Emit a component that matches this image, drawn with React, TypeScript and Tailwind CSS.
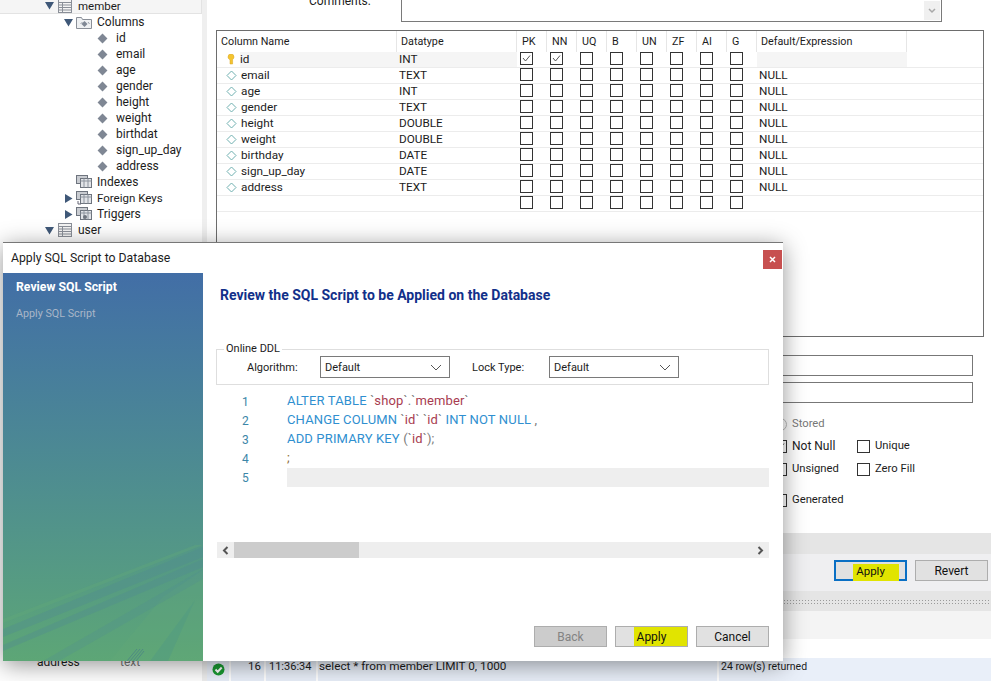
import React from "react";

const FONT = "font-['Roboto',sans-serif]";

function Tri({ open }: { open?: boolean }) {
  return (
    <svg width="9" height="9" viewBox="0 0 9 9" className="shrink-0">
      {open ? <path d="M0 1h9L4.5 8.5z" fill="#3f5878" /> : <path d="M1 0v9L8.5 4.5z" fill="#3f5878" />}
    </svg>
  );
}

function TableIcon() {
  return (
    <svg width="14" height="14" viewBox="0 0 14 14" className="shrink-0">
      <rect x="0.5" y="0.5" width="13" height="13" fill="#f4f4f4" stroke="#8a8f98" />
      <path d="M0.5 3.5h13M0.5 6h13M0.5 8.5h13M0.5 11h13M4.5 3.5v10" stroke="#8a8f98" strokeWidth="1" fill="none" />
    </svg>
  );
}

function FolderIcon() {
  return (
    <svg width="16" height="13" viewBox="0 0 16 13" className="shrink-0">
      <path d="M0.5 12.5V1.5h5l1 2h9v9z" fill="#eef0f2" stroke="#8a8f98" />
      <path d="M8.5 5l3 3-3 3-3-3z" fill="#7f8794" />
      <path d="M4.5 8l2-2M12 6l1.5 2" stroke="#9aa1ab" />
    </svg>
  );
}

function StackIcon({ kind }: { kind: string }) {
  return (
    <svg width="16" height="14" viewBox="0 0 16 14" className="shrink-0">
      <rect x="0.5" y="0.5" width="11" height="8" fill="#c9ccd1" stroke="#6e747e" />
      <rect x="4.5" y="3.5" width="11" height="9" fill="#e2e4e8" stroke="#6e747e" />
      <path d="M4.5 6h11M8 3.5v9M12 3.5v9" stroke="#8d949e" />
      {kind === "fk" && <path d="M2 10v3h3" stroke="#667" fill="none" />}
      {kind === "tr" && <circle cx="9" cy="10" r="2" fill="#6e747e" />}
    </svg>
  );
}

function Diamond() {
  return <span className="block w-[7px] h-[7px] rotate-45 bg-[#7f8794] shrink-0" />;
}

function ColDiamond() {
  return (
    <svg width="11" height="11" viewBox="0 0 11 11" className="shrink-0">
      <path d="M5.5 1L10 5.5 5.5 10 1 5.5z" fill="#fff" stroke="#6fb0b0" />
    </svg>
  );
}

function KeyIcon() {
  return (
    <svg width="8" height="11" viewBox="0 0 8 11" className="shrink-0">
      <path d="M1 3a3 3 0 0 1 6 0c0 1.5-1 2-1.400 2.600V10H3V6C2 5 1 4.500 1 3z" fill="#f4c430" stroke="#d9a520" strokeWidth="0.5" />
    </svg>
  );
}

function Check({ on }: { on?: boolean }) {
  return (
    <span className="block w-[13px] h-[13px] border shrink-0 bg-white border-[#333]">
      {on && (
        <svg width="11" height="11" viewBox="0 0 11 11" className="block">
          <path d="M2 5l2.500 3L9 2.500" stroke="#555" strokeWidth="1" fill="none" />
        </svg>
      )}
    </span>
  );
}

function Chevron({ dir }: { dir: "l" | "r" }) {
  return (
    <svg width="7" height="9" viewBox="0 0 7 9">
      <path d={dir === "l" ? "M5.500 1L2 4.500 5.500 8" : "M1.500 1L5 4.500 1.500 8"} stroke="#555" strokeWidth="2" fill="none" />
    </svg>
  );
}

function DownChevron() {
  return (
    <svg width="12" height="7" viewBox="0 0 12 7" className="shrink-0">
      <path d="M1 1l5 5 5-5" stroke="#555" strokeWidth="1" fill="none" />
    </svg>
  );
}

const cols = ["id", "email", "age", "gender", "height", "weight", "birthdat", "sign_up_day", "address"];

const rows = [
  ["id", "INT", ""],
  ["email", "TEXT", "NULL"],
  ["age", "INT", "NULL"],
  ["gender", "TEXT", "NULL"],
  ["height", "DOUBLE", "NULL"],
  ["weight", "DOUBLE", "NULL"],
  ["birthday", "DATE", "NULL"],
  ["sign_up_day", "DATE", "NULL"],
  ["address", "TEXT", "NULL"],
  ["", "", ""],
];

const flags = ["PK", "NN", "UQ", "B", "UN", "ZF", "AI", "G"];
const GRID = "grid grid-cols-[180px_120px_repeat(8,30px)_150px_1fr]";

function Sidebar() {
  return (
    <aside className="w-[202px] shrink-0 h-full flex flex-col overflow-hidden text-[#1c1c1c]">
      <div className="h-[16px] -mt-[2px] pl-[45px] flex items-center bg-[#f5f5f5] border-b border-r border-[#e3e3e3]">
        <Tri open />
        <span className="ml-[4px]"><TableIcon /></span>
        <span className="ml-[6px] text-[11.5px]">member</span>
      </div>
      <div className="h-[16px] pl-[64px] flex items-center">
        <Tri open />
        <span className="ml-[3px]"><FolderIcon /></span>
        <span className="ml-[5px]">Columns</span>
      </div>
      {cols.map((c) => (
        <div key={c} className="h-[16px] pl-[99px] flex items-center">
          <Diamond />
          <span className="ml-[10px]">{c}</span>
        </div>
      ))}
      <div className="h-[16px] pl-[76px] flex items-center">
        <StackIcon kind="ix" />
        <span className="ml-[5px]">Indexes</span>
      </div>
      <div className="h-[16px] pl-[64px] flex items-center">
        <Tri />
        <span className="ml-[3px]"><StackIcon kind="fk" /></span>
        <span className="ml-[5px] text-[11.5px]">Foreign Keys</span>
      </div>
      <div className="h-[16px] pl-[64px] flex items-center">
        <Tri />
        <span className="ml-[3px]"><StackIcon kind="tr" /></span>
        <span className="ml-[5px]">Triggers</span>
      </div>
      <div className="h-[16px] pl-[45px] flex items-center">
        <Tri open />
        <span className="ml-[4px]"><TableIcon /></span>
        <span className="ml-[6px]">user</span>
      </div>
      <div className="mt-auto mb-[11px] h-[16px] pl-[37px] flex items-center">
        <span className="w-[83px]">address</span>
        <span className="text-[#777]">text</span>
      </div>
    </aside>
  );
}

function ColumnTable() {
  return (
    <div className="ml-[9px] mt-[8px] w-[768px] h-[307px] border border-[#6d6d6d] bg-white text-[#1c1c1c]">
      <div className={`${GRID} h-[21px] text-[10.75px]`}>
        <div className="pl-[4px] pt-[1px] flex items-center border-r border-[#e6e6e6]">Column Name</div>
        <div className="pl-[4px] pt-[1px] flex items-center border-r border-[#e6e6e6]">Datatype</div>
        {flags.map((f) => (
          <div key={f} className="pl-[5px] pt-[1px] flex items-center border-r border-[#e6e6e6]">{f}</div>
        ))}
        <div className="pl-[4px] pt-[1px] flex items-center border-r border-[#e6e6e6]">Default/Expression</div>
        <div />
      </div>
      {rows.map((r, i) => (
        <div key={i} className={`${GRID} h-[16px] border-b border-[#ececec] text-[11.75px] leading-[14px]`}>
          <div className={`flex items-center ${i === 0 ? "pl-[10px]" : "pl-[9px]"}`}>
            {r[0] && (i === 0 ? <KeyIcon /> : <ColDiamond />)}
            {r[0] && (
              <span className={`${i === 0 ? "bg-[#f5f5f5] ml-[5px]" : "ml-[4px]"} flex-1 h-[15px] leading-[14px]`}>{r[0]}</span>
            )}
          </div>
          <div className={`pl-[2px] ${i === 0 ? "bg-[#f5f5f5]" : ""}`}>{r[1]}</div>
          {flags.map((f, j) => (
            <div key={f} className="pl-[3px]">
              <Check on={i === 0 && j < 2} />
            </div>
          ))}
          <div className={`pl-[2px] ${i === 0 ? "bg-[#f5f5f5]" : ""}`}>{r[2]}</div>
          <div />
        </div>
      ))}
    </div>
  );
}

function OptionsForm() {
  return (
    <div className="h-[196px] text-[#1c1c1c] text-[11.25px]">
      <div className="ml-[300px] w-[466px] mt-[18px] h-[21px] border border-[#777]" />
      <div className="ml-[300px] w-[466px] mt-[6px] h-[21px] border border-[#777]" />
      <div className="ml-[567px] mt-[13px] flex items-center h-[16px] text-[#777]">
        <span className="block w-[13px] h-[13px] rounded-full border border-[#bbb]" />
        <span className="ml-[5px]">Stored</span>
      </div>
      <div className="ml-[567px] mt-[6px] grid grid-cols-[83px_auto] h-[16px] items-center">
        <div className="flex items-center"><Check on /><span className="ml-[5px] text-[12px]">Not Null</span></div>
        <div className="flex items-center"><Check /><span className="ml-[5px]">Unique</span></div>
      </div>
      <div className="ml-[567px] mt-[7px] grid grid-cols-[83px_auto] h-[16px] items-center">
        <div className="flex items-center"><Check /><span className="ml-[5px]">Unsigned</span></div>
        <div className="flex items-center"><Check /><span className="ml-[5px]">Zero Fill</span></div>
      </div>
      <div className="ml-[567px] mt-[15px] flex items-center h-[16px]">
        <Check />
        <span className="ml-[5px]">Generated</span>
      </div>
    </div>
  );
}

function MainPane() {
  return (
    <main className="flex-1 h-full flex flex-col overflow-hidden text-[#1c1c1c]">
      <div className="h-[22px] flex">
        <span className="ml-[102px] w-[92px] -mt-[7px] leading-[16px]">Comments:</span>
        <div className="w-[541px] h-[30px] -mt-[8px] border border-[#7a7a7a] bg-white flex items-end justify-end">
          <span className="w-[16px] h-[19px] bg-[#f0f0f0] flex items-center justify-center mb-[1px] mr-[1px]">
            <svg width="8" height="6" viewBox="0 0 8 6"><path d="M1 1l3 3 3-3" stroke="#a8a8a8" strokeWidth="1.500" fill="none" /></svg>
          </span>
        </div>
      </div>
      <ColumnTable />
      <OptionsForm />
      <div className="h-[21px] bg-[#e5e5e5]" />
      <div className="h-[37px] bg-[#efeff1] flex items-center justify-end pr-[3px] gap-[8px] pb-[4px]">
        <button className="relative w-[73px] h-[21px] border-2 border-[#0a6fc4] bg-[#e1e1e1] text-[#111] text-[11.5px]">
          <span className="absolute left-[17px] top-[2px] w-[46px] h-[17px] bg-[#e1e400]" />
          <span className="relative">Apply</span>
        </button>
        <button className="w-[73px] h-[21px] border border-[#adadad] bg-[#e1e1e1] text-[#111]">Revert</button>
      </div>
      <div className="h-[20px] bg-[#e5e5e5] flex items-center">
        <div className="w-full h-[5px] bg-[radial-gradient(#9a9a9a_0.7px,transparent_0.8px)] bg-[length:3px_3px]" />
      </div>
      <div className="h-[28px] bg-[#f4f4f4]" />
      <div className="h-[19px] bg-white" />
      <div className="flex-1 bg-[#e9eff9] flex items-center pl-[5px]">
        <svg width="13" height="13" viewBox="0 0 13 13" className="shrink-0">
          <circle cx="6.500" cy="6.500" r="6" fill="#1a9a32" />
          <path d="M3.500 6.500l2.200 2.200 4-4.200" stroke="#fff" strokeWidth="2" fill="none" />
        </svg>
        <div className="ml-[4px] h-full w-[35px] border-l-2 border-white pr-[3px] text-right leading-[17px] text-[11.5px]">16</div>
        <div className="h-full w-[52px] border-l-2 border-white pl-[3px] leading-[17px] text-[11px]">11:36:34</div>
        <div className="h-full w-[401px] border-l-2 border-white pl-[1px] leading-[17px] text-[11.75px]">select * from member LIMIT 0, 1000</div>
        <div className="h-full flex-1 border-l-2 border-white pl-[2px] leading-[17px] text-[10.5px]">24 row(s) returned</div>
      </div>
    </main>
  );
}

function WizardArt() {
  return (
    <svg width="200" height="116" viewBox="0 0 200 116" className="absolute left-0 bottom-0">
      <path d="M160 52L200 25V116H107z" fill="#62aa78" opacity="0.3" />
      <path d="M192 55L147 116H165z" fill="#4f9a82" opacity="0.45" />
      <path d="M200 2L0 84V92L200 12z" fill="#4f8a92" opacity="0.35" />
      <path d="M200 14L0 100V106L200 22z" fill="#4f8a92" opacity="0.35" />
      <path d="M200 24L40 116H56L200 34z" fill="#4f8a92" opacity="0.25" />
      <path d="M200 -3L0 74V78L200 0z" fill="#62aa78" opacity="0.35" />
      <path d="M124 116l10-12M127 116l10-12M130 116l10-12M133 116l8-10" stroke="#4f8a82" strokeWidth="1" />
    </svg>
  );
}

function SelectBox({ w }: { w: string }) {
  return (
    <div className={`${w} h-[22px] border border-[#7a7a7a] bg-white flex items-center justify-between pl-[4px] pr-[7px]`}>
      <span className="mt-[1px]">Default</span>
      <DownChevron />
    </div>
  );
}

function CodeLine({ n, children, active }: { n: number; children?: React.ReactNode; active?: boolean }) {
  return (
    <div className="h-[19px] flex items-center">
      <span className="w-[71px] pl-[26px] text-[12px] tracking-normal text-[#3b86a8]">{n}</span>
      <span className={`flex-1 h-[19px] leading-[18px] ${active ? "bg-[#eeeeee]" : ""}`}>{children}</span>
    </div>
  );
}

const K = ({ children }: { children: React.ReactNode }) => <span className="text-[#2f8fd0]">{children}</span>;
const S = ({ children }: { children: React.ReactNode }) => <span className="text-[#a83c50]">{children}</span>;
const P = ({ children }: { children: React.ReactNode }) => <span className="text-[#7a7a7a]">{children}</span>;

function Dialog() {
  return (
    <div className="absolute left-[3px] top-[242px] w-[780px] h-[419px] bg-white border-t border-[#777] shadow-[0_4px_22px_rgba(0,0,0,0.42)] flex flex-col text-[#1c1c1c]">
      <div className="h-[30px] shrink-0 flex items-center justify-between pl-[8px] pr-[1px]">
        <span className="-mt-[1px] text-[12.25px]">Apply SQL Script to Database</span>
        <button className="mt-[2px] w-[19px] h-[19px] bg-[#c75050] flex items-center justify-center">
          <svg width="7" height="7" viewBox="0 0 7 7"><path d="M1 1l5 5M6 1L1 6" stroke="#fff" strokeWidth="1.500" /></svg>
        </button>
      </div>
      <div className="flex-1 flex min-h-0">
        <div className="relative w-[200px] shrink-0 bg-gradient-to-b from-[#426ea6] to-[#5da676] pl-[13px] pt-[5px] overflow-hidden">
          <div className="font-bold text-white leading-[18px] text-[12.25px]">Review SQL Script</div>
          <div className="mt-[9px] text-[#a9b6c8] leading-[18px] text-[10.75px]">Apply SQL Script</div>
          <WizardArt />
        </div>
        <div className="flex-1 flex flex-col pl-[13px] pr-[14px] min-w-0">
          <h1 className="mt-[13px] ml-[4px] text-[14px] font-bold leading-[18px] text-[#12308a]">
            Review the SQL Script to be Applied on the Database
          </h1>
          <fieldset className="mt-[38px] h-[43px] border border-[#dedede] pl-[30px] text-[11px]">
            <legend className="-ml-[23px] px-[2px] leading-[14px]">Online DDL</legend>
            <div className="flex items-center">
              <span className="w-[73px] mt-[2px]">Algorithm:</span>
              <SelectBox w="w-[130px]" />
              <span className="ml-[22px] w-[77px] mt-[2px]">Lock Type:</span>
              <SelectBox w="w-[130px]" />
            </div>
          </fieldset>
          <div className="mt-[7px] text-[13px] tracking-[0.15px]">
            <CodeLine n={1}><K>ALTER TABLE</K> <P>`</P><S>shop</S><P>`.`</P><S>member</S><P>`</P></CodeLine>
            <CodeLine n={2}><K>CHANGE COLUMN</K> <P>`</P><S>id</S><P>`</P> <P>`</P><S>id</S><P>`</P> <K>INT NOT NULL</K> <P>,</P></CodeLine>
            <CodeLine n={3}><K>ADD PRIMARY KEY</K> <P>(`</P><S>id</S><P>`);</P></CodeLine>
            <CodeLine n={4}><span className="text-[#8a6a30]">;</span></CodeLine>
            <CodeLine n={5} active />
          </div>
          <div className="mt-[55px] ml-[1px] h-[16px] bg-[#eeeeee] flex items-center justify-between pr-[5px] pl-[5px]">
            <Chevron dir="l" />
            <Chevron dir="r" />
          </div>
          <div className="-mt-[16px] ml-[18px] w-[125px] h-[16px] bg-[#cccccc]" />
          <div className="mt-auto mb-[14px] flex justify-end gap-[8px]">
            <button className="w-[73px] h-[21px] border border-[#adadad] bg-[#cccccc] text-[#838383]">Back</button>
            <button className="relative w-[73px] h-[21px] border border-[#adadad] bg-[#e1e1e1] text-[#111]">
              <span className="absolute left-[18px] top-0 w-[53px] h-[19px] bg-[#e1e400]" />
              <span className="relative">Apply</span>
            </button>
            <button className="w-[73px] h-[21px] border border-[#adadad] bg-[#e1e1e1] text-[#111]">Cancel</button>
          </div>
        </div>
      </div>
    </div>
  );
}

export default function App() {
  return (
    <div className={`relative w-[991px] h-[681px] overflow-hidden bg-white text-[12px] leading-[16px] ${FONT}`}>
      <div className="flex h-full">
        <Sidebar />
        <div className="w-[5px] shrink-0 bg-[#efefef]" />
        <MainPane />
      </div>
      <Dialog />
    </div>
  );
}
